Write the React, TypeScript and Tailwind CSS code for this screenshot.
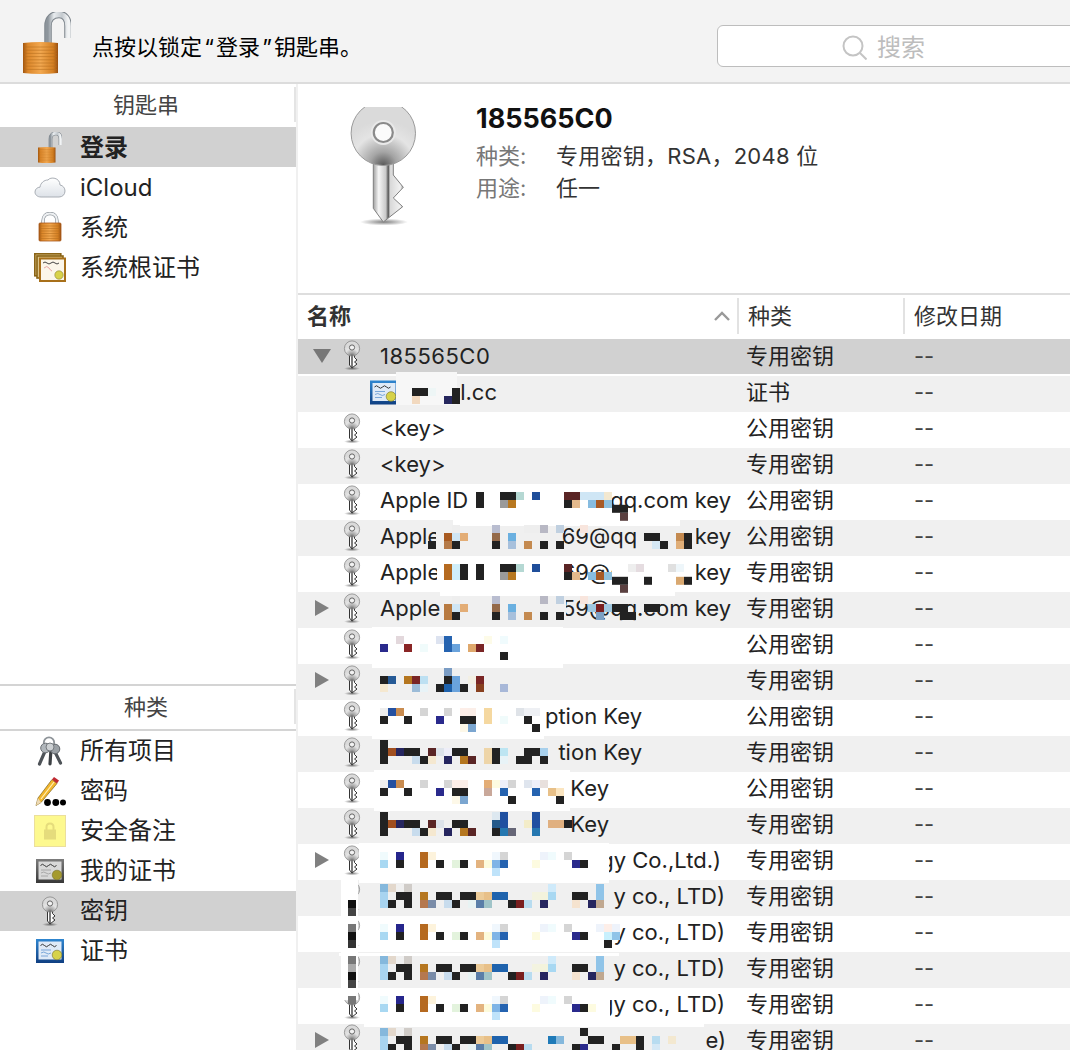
import React from 'react';

type Cell = [number, number, string];
type Block = { y: number; cells: Cell[] };
type Patch = [number, number, number, number, string];

const W = '#ffffff';
const G = '#f0f0f0';
const K = '#222222';

// cover-ups that sit over the row text
const patches: Patch[] = [
  [396, 372, 61, 33, '#f7f7f7'],
  [610, 488, 70, 8, W],
  [453, 520, 227, 6, W],
  [436, 526, 123, 27, G],
  [636, 526, 60, 27, G],
  [437, 556, 128, 34, W],
  [612, 556, 82, 34, W],
  [440, 590, 235, 6, W],
  [440, 596, 126, 27, G],
  [372, 627, 191, 41, W],
  [372, 700, 172, 39, W],
  [374, 770, 196, 41, W],
  [359, 843, 250, 40, W],
  [341, 880, 17, 120, W],
  [339, 953, 280, 3, W],
  [364, 988, 246, 39, W],
  [610, 1018, 94, 9, W],
];

const patA = (y: number, extra: Cell[] = []): Block => ({
  y,
  cells: [
    [0, 0, '#f0fbfd'], [0, 1, '#a8d8f2'], [2, 0, '#26268c'], [2, 1, K], [5, 0, '#b5691f'], [5, 1, '#b5691f'],
    [6, 0, '#fdf3dc'], [7, 1, K], [9, 1, '#e3f3dd'], [10, 1, K], [12, 1, '#e3b37f'], [13, 1, '#fdfbdc'],
    [14, 0, '#f0f7fd'], [14, 1, '#7eb4e6'], [14, 2, '#bfe3fa'], [15, 0, '#d5d5d5'], [15, 1, '#2563b0'],
    [19, 1, '#fdfbe0'], [20, 0, '#eef3fb'], [21, 0, '#f0fbfd'], [23, 0, '#d5d5d5'], [24, 1, '#2a2a8c'], [25, 1, K],
    ...extra,
  ],
});

const patB = (y: number, tail: boolean): Block => ({
  y,
  cells: [
    [0, 0, '#85b8dc'], [0, 1, '#a8d4f0'], [0, 2, '#a8d4f0'], [1, 0, '#e3d8cc'], [1, 2, K], [2, 1, K], [3, 0, '#d0ccc8'], [3, 1, K], [3, 2, K],
    [5, 1, '#b5761f'], [5, 2, '#b5784f'], [6, 2, '#7a8ca8'], [7, 1, K], [8, 1, K], [8, 2, '#c8dced'], [9, 2, K],
    [10, 1, K], [11, 1, K], [11, 2, '#e8f3f3'], [12, 1, '#eccb98'], [12, 2, '#5a7ea8'], [13, 1, '#e8c088'], [13, 2, '#a0c4c8'],
    [14, 1, '#1f63ad'], [15, 1, '#1f63ad'], [16, 2, K], [17, 2, '#7a2020'], [18, 2, '#b8dcf0'],
    ...(tail
      ? ([
          [19, 1, '#f3f3e0'], [20, 1, '#f3f3dc'], [20, 2, '#26265f'], [21, 0, '#cfeafa'], [21, 1, '#a8d8f2'],
          [24, 1, K], [25, 1, K], [24, 2, '#f5e3cf'], [26, 2, '#26265f'], [27, 0, '#90c4e8'], [27, 1, '#90c4e8'], [27, 2, '#c0a890'],
        ] as Cell[])
      : ([
          [21, 1, '#1f7ab8'], [22, 1, '#85b8dc'], [25, 0, K], [26, 1, K], [27, 1, K], [25, 2, '#2a2a8c'], [24, 2, K],
          [30, 1, '#e8c088'], [31, 1, '#e8c088'], [32, 1, K], [29, 2, K], [32, 2, K], [34, 1, '#b8dcf0'], [34, 2, '#d5e8f5'], [36, 1, '#f3e8d0'],
        ] as Cell[])),
  ],
});

const blocks: Block[] = [
  { y: 388, cells: [[4, 0, K], [5, 0, K], [6, 0, '#eef6f6'], [4, 1, '#f2d9bf'], [8, 1, '#26275e'], [9, 0, K], [9, 1, K]] },
  {
    y: 492,
    cells: [
      [12, 0, K], [12, 1, K], [15, 0, K], [16, 0, K], [17, 0, '#b5d8d3'], [15, 1, '#9a9a9a'], [16, 1, '#b87820'], [19, 0, '#1f4e9a'],
      [23, 0, '#5a2525'], [24, 0, '#5a2525'], [23, 1, K], [24, 1, '#e3b98c'], [25, 0, '#cfe6f5'], [26, 0, '#cfe6f5'], [27, 0, '#cfe6f5'],
      [26, 1, '#87bce0'], [27, 1, '#a85a25'], [28, 0, '#f3e8d0'], [28, 1, '#8fc0dd'], [29, 1.6, K], [30, 1.6, K], [30, 2.6, '#5a4040'],
    ],
  },
  {
    y: 525,
    cells: [
      [8, 1, '#a85a20'], [8, 2, '#b57a48'], [9, 0, '#eeeeee'], [9, 1, '#cfe6f5'], [9, 2, K], [10, 1, '#e3ad76'], [6, 2, K], [14, 0, '#b9bdd0'],
      [14, 1, '#94694a'], [14, 2, K], [16, 1, '#6bb0e0'], [16, 2, '#a7c0dc'], [18, 0, '#eeeeee'], [18, 2, '#c48a50'], [19, 0, '#eeeeee'],
      [20, 0, '#b8b8c4'], [20, 2, K], [22, 0, '#c0d0e0'], [22, 2, K], [25, 0, '#f8e5dd'], [33, 1, K], [34, 1, K], [35, 2, K], [34, 2, '#d5e8f5'],
      [37, 1, '#c48a50'], [37, 2, '#e0ae78'], [38, 1, K], [38, 2, K],
    ],
  },
  {
    y: 564,
    cells: [
      [8, 0, '#b56a20'], [8, 1, '#b56a20'], [9, 0, '#cfeefa'], [9, 1, '#cfeefa'], [10, 0, K], [10, 1, K], [12, 0, K], [12, 1, K], [15, 0, K], [16, 0, K],
      [17, 0, '#b5d8d3'], [15, 1, '#9a9a9a'], [16, 1, '#b87820'], [19, 0, '#1f4e9a'], [23, 0, '#5a2525'], [23, 1, K], [24, 1, '#e3b98c'],
      [26, 1, '#87bce0'], [27, 1, '#a85a25'], [28, 1, '#8fc0dd'], [29, 1.6, K], [30, 1.6, K], [30, 2.6, '#5a4040'], [31, 0, '#eeeeee'], [32, 0, '#e5dce0'],
      [33, 1.6, K], [36, 0, '#e0e0e0'], [37, 0, '#eef6fa'], [37, 1.6, '#d9a870'], [38, 1.6, K],
    ],
  },
  {
    y: 596,
    cells: [
      [8, 1, '#b87a40'], [8, 2, '#b87a40'], [9, 0, '#eeeeee'], [9, 1, '#cfe6f5'], [9, 2, K], [10, 1, '#e3ad76'], [14, 0, '#b9bdd0'], [14, 1, '#94694a'],
      [14, 2, K], [16, 1, '#6bb0e0'], [16, 2, '#a7c0dc'], [18, 2, '#c48a50'], [20, 0, '#b8b8c4'], [20, 2, K], [22, 0, '#c0d0e0'], [22, 2, K],
      [25, 0, '#f8e5dd'], [26, 1, '#a0c8e0'], [27, 1, '#7a2020'], [27, 2, '#7ba0c4'], [28, 1, '#a0c8e0'], [29, 1, K], [30, 1, K], [30, 2, K], [31, 2, K],
      [33, 1, K], [34, 1, K],
    ],
  },
  {
    y: 636,
    cells: [
      [0, 1, '#2a2a8c'], [2, 0, '#e3d8dc'], [3, 1, '#8a2525'], [5, 1, '#f0fbfb'], [7, 0, '#dde3f0'], [8, 0, '#2563b0'], [8, 1, '#2563b0'], [9, 1, '#6aa3dc'],
      [11, 1, '#dfa86c'], [12, 1, '#7a2525'], [13, 0, '#fdfbe8'], [15, 0, '#f0fbfd'], [15, 2, K],
    ],
  },
  {
    y: 668,
    cells: [
      [8, 0, '#7a9cc4'], [8, 1, K], [8, 2, '#1f63ad'], [7, 2, K], [9, 1, '#6aa3dc'], [9, 2, '#6aa3dc'], [10, 2, K], [0, 1, K], [0, 2, '#f5e8d0'], [1, 1, '#255a96'],
      [3, 1, '#b5761f'], [4, 1, '#7a2525'], [4, 2, '#9cbcd8'], [5, 1, '#bde0f2'], [5, 2, '#e8f3f7'], [11, 1, '#f3f0e4'], [12, 1, '#7a2525'], [12, 2, '#88401f'], [15, 2, '#a8b8d8'],
    ],
  },
  {
    y: 708,
    cells: [
      [0, 0, '#eeeeee'], [0, 1, K], [1, 0, '#2450a0'], [2, 0, '#c98c50'], [3, 1, K], [5, 0, '#d5d5d5'], [8, 0, '#d5d5d5'], [7, 1, '#2a2a8c'], [10, 1, K], [11, 1, K],
      [10, 0, '#fdeee8'], [11, 0, '#fbeee8'], [10, 2, '#fdf8e8'], [11, 2, '#7ba6d0'], [13, 0, '#f5d8a0'], [13, 1, '#f5d8a0'], [15, 1, '#f0fbfb'], [17, 0, '#dfe3e8'],
      [18, 0, '#eef0f4'], [18, 1, K], [19, 0, '#eef0f4'], [19, 2, K],
    ],
  },
  {
    y: 740,
    cells: [
      [0, 0, K], [0, 1, K], [0, 2, K], [1, 1, '#a04f20'], [2, 1, '#26265f'], [3, 1, K], [4, 1, K], [5, 2, K], [4, 2, '#c8dced'], [6, 1, '#5a2525'], [6, 2, '#f5e8d0'],
      [7, 1, '#dde3ea'], [8, 1, '#eeeef8'], [8, 2, '#26265f'], [9, 1, K], [10, 1, K], [10, 2, '#b5761f'], [11, 2, '#5a2525'], [13, 1, '#eed5a8'], [13, 2, '#eed5a8'],
      [14, 0, '#eeeeee'], [14, 1, K], [14, 2, K], [15, 1, '#bde5f2'], [15, 2, '#e8f3f7'], [17, 2, K], [18, 1, K], [18, 2, K], [19, 1, K], [20, 1, '#a8d0ec'], [20, 2, K],
    ],
  },
  {
    y: 780,
    cells: [
      [0, 0, '#eeeeee'], [0, 1, K], [1, 0, '#2450a0'], [2, 0, '#c98c50'], [3, 1, K], [5, 0, '#d5d5d5'], [7, 1, '#2a2a8c'], [8, 0, '#d5d5d5'], [9, 0, '#fdeee8'], [9, 1, K],
      [10, 0, '#fbeee8'], [10, 1, K], [10, 2, '#7ba6d0'], [9, 2, '#fdf8e8'], [13, 0, '#e3ad76'], [13, 1, '#c9a89a'], [14, 0, '#fdfbe0'], [15, 0, '#eef0fa'], [15, 1, '#2563b0'],
      [16, 0, '#d5d5d5'], [16, 2, K], [18, 0, '#dfe5ee'], [19, 0, '#eef0fa'], [19, 1, '#2563b0'], [20, 0, '#e8e0dd'], [21, 1, '#e8c088'], [22, 1, '#fbe5c0'], [22, 2, K],
    ],
  },
  {
    y: 812,
    cells: [
      [0, 0, K], [0, 1, K], [0, 2, K], [1, 1, '#a04f20'], [2, 1, '#26265f'], [3, 1, K], [4, 1, K], [6, 1, '#5a2525'], [7, 1, '#dde3ea'], [9, 1, K], [10, 1, K],
      [4, 2, '#c8dced'], [5, 2, K], [6, 2, '#f5e8d0'], [8, 2, '#26265f'], [10, 2, '#b5761f'], [11, 2, '#5a2525'], [14, 0, '#dde8f0'], [14, 1, '#255a8a'], [14, 2, K],
      [15, 0, '#2050a0'], [15, 1, '#2050a0'], [15, 2, '#2577b0'], [16, 2, '#666677'], [19, 0, '#2050a0'], [19, 1, '#2050a0'], [19, 2, '#2577b0'], [18, 1, '#f3ecc8'],
      [21, 1, '#e0b080'], [22, 1, '#e0b080'], [23, 1, K],
    ],
  },
  patA(852),
  patB(884, true),
  { y: 900, cells: [[-4, 0, '#111111'], [-4, 1, '#444444'], [-4, 3, '#777777'], [-4, 4, '#111111'], [-4, 5, '#333333'], [-4, 7, '#777777'], [-4, 8, '#aaaaaa'], [-4, 9, '#111111'], [-4, 10, '#444444'], [-4, 12, '#777777']] },
  patA(924, [[27, 0, '#eef3fb'], [28, 0, '#fdeee8'], [28, 1, '#c8f0fd'], [28, 2, K], [29, 0, '#eef3fb'], [29, 1, '#90c4e8']]),
  patB(956, true),
  patA(996, [[26, 1, '#fdfbe0']]),
  patB(1028, false),
];

const types = ['专用密钥', '证书', '公用密钥', '专用密钥', '公用密钥', '公用密钥', '专用密钥', '专用密钥', '公用密钥', '专用密钥', '公用密钥', '专用密钥', '公用密钥', '专用密钥', '专用密钥', '专用密钥', '专用密钥', '专用密钥', '专用密钥', '专用密钥'];

type Row = { left?: string; right?: string; width?: string; arrow?: 'down' | 'right'; cert?: boolean };

const rows: Row[] = [
  { left: '185565C0', arrow: 'down' },
  { right: 'l.cc', width: 'w-[117px]', cert: true },
  { left: '<key>' },
  { left: '<key>' },
  { left: 'Apple ID', right: 'qq.com key', width: 'w-[351px]' },
  { left: 'Apple', right: '69@qq.com key', width: 'w-[351px]' },
  { left: 'Apple', right: '69@qq.com key', width: 'w-[351px]' },
  { left: 'Apple', right: '59@qq.com key', width: 'w-[351px]', arrow: 'right' },
  {},
  { arrow: 'right' },
  { right: 'ption Key', width: 'w-[262px]' },
  { right: 'tion Key', width: 'w-[262px]' },
  { right: 'Key', width: 'w-[229px]' },
  { right: 'Key', width: 'w-[229px]' },
  { right: 'gy Co.,Ltd.)', width: 'w-[341px]', arrow: 'right' },
  { right: 'y co., LTD)', width: 'w-[345px]' },
  { right: 'y co., LTD)', width: 'w-[345px]' },
  { right: 'y co., LTD)', width: 'w-[345px]' },
  { right: 'gy co., LTD)', width: 'w-[345px]' },
  { right: 'e)', width: 'w-[346px]', arrow: 'right' },
];

const Defs = () => (
  <defs>
    <linearGradient id="lockBody" x1="0" x2="1" y1="0" y2="0">
      <stop offset="0" stopColor="#a2560f" />
      <stop offset="0.14" stopColor="#dc872a" />
      <stop offset="0.5" stopColor="#f2a850" />
      <stop offset="0.86" stopColor="#d47f22" />
      <stop offset="1" stopColor="#9a5010" />
    </linearGradient>
    <linearGradient id="shackle" x1="0" x2="1" y1="0" y2="0">
      <stop offset="0" stopColor="#8d959c" />
      <stop offset="0.3" stopColor="#e8ecef" />
      <stop offset="0.7" stopColor="#c3c9ce" />
      <stop offset="1" stopColor="#f2f4f5" />
    </linearGradient>
    <radialGradient id="keyHead" cx="0.5" cy="1" r="0.7">
      <stop offset="0" stopColor="#575757" />
      <stop offset="0.3" stopColor="#a5a5a5" />
      <stop offset="0.7" stopColor="#e4e4e4" />
      <stop offset="1" stopColor="#dadada" />
    </radialGradient>
    <linearGradient id="keyStem" x1="0" x2="1" y1="0" y2="0">
      <stop offset="0" stopColor="#a0a0a0" />
      <stop offset="0.18" stopColor="#f6f6f6" />
      <stop offset="0.42" stopColor="#c8c8c8" />
      <stop offset="0.5" stopColor="#555555" />
      <stop offset="0.56" stopColor="#d8d8d8" />
      <stop offset="0.9" stopColor="#f2f2f2" />
      <stop offset="1" stopColor="#9a9a9a" />
    </linearGradient>
    <radialGradient id="keyShadow">
      <stop offset="0" stopColor="#000" stopOpacity="0.5" />
      <stop offset="1" stopColor="#000" stopOpacity="0" />
    </radialGradient>
    <linearGradient id="cloud" x1="0" x2="0" y1="0" y2="1">
      <stop offset="0" stopColor="#ffffff" />
      <stop offset="1" stopColor="#dde2e8" />
    </linearGradient>
    <linearGradient id="blueFrame" x1="0" x2="0" y1="0" y2="1">
      <stop offset="0" stopColor="#2f86d0" />
      <stop offset="1" stopColor="#0f3f82" />
    </linearGradient>
    <linearGradient id="greyFrame" x1="0" x2="0" y1="0" y2="1">
      <stop offset="0" stopColor="#7c7c7c" />
      <stop offset="1" stopColor="#383838" />
    </linearGradient>
  </defs>
);

const Stripes = ({ x, w, y, n, gap }: { x: number; w: number; y: number; n: number; gap: number }) => (
  <g stroke="#b56d1e" strokeOpacity="0.55" strokeWidth="1">
    {Array.from({ length: n }).map((_, i) => (
      <line key={i} x1={x} x2={x + w} y1={y + i * gap} y2={y + i * gap} />
    ))}
  </g>
);

const OpenLock = ({ className }: { className: string }) => (
  <svg viewBox="0 0 48 62" className={className}>
    <Defs />
    <path d="M25 32V14C25 6 30 2.5 36 2.5S45 7 45 14V26" fill="none" stroke="#7d858c" strokeWidth="7.5" />
    <path d="M25 32V14C25 6 30 2.5 36 2.5S45 7 45 14V26" fill="none" stroke="url(#shackle)" strokeWidth="5.5" />
    <path d="M0 31Q17 29 35 31V61Q17 63 0 61Z" fill="url(#lockBody)" />
    <Stripes x={1} w={33} y={35} n={8} gap={3.2} />
  </svg>
);

const ClosedLock = () => (
  <svg viewBox="0 0 24 30" className="h-[30px] w-[24px]">
    <Defs />
    <path d="M5 13V9C5 4 8 1.5 12 1.5S19 4 19 9V13" fill="none" stroke="#8d959c" strokeWidth="3.4" />
    <path d="M5 13V9C5 4 8 1.5 12 1.5S19 4 19 9V13" fill="none" stroke="#eef0f2" strokeWidth="2" />
    <rect x="1" y="11" width="22" height="18" rx="1" fill="url(#lockBody)" stroke="#a8581c" strokeWidth="0.8" />
    <Stripes x={2} w={20} y={14} n={6} gap={2.5} />
  </svg>
);

const BigKey = () => (
  <svg viewBox="0 0 68 120" className="h-[120px] w-[68px]">
    <Defs />
    <ellipse cx="34" cy="115" rx="24" ry="3.5" fill="url(#keyShadow)" />
    <path d="M23.3 50H43.3V68L53.3 80.3L43.3 91L52.7 99.7L33.3 115L23.3 101.3Z" fill="url(#keyStem)" stroke="#7f7f7f" strokeWidth="1" />
    <circle cx="33.3" cy="26.3" r="32.2" fill="url(#keyHead)" stroke="#9a9a9a" strokeWidth="1" />
    <circle cx="33.3" cy="25.5" r="12.5" fill="#e9e9e9" />
    <circle cx="33.3" cy="25.5" r="9.5" fill="#fbfbfb" stroke="#8a8a8a" strokeWidth="2.2" />
  </svg>
);

const SmallKey = () => (
  <svg viewBox="0 0 18 31" className="h-[31px] w-[18px] shrink-0">
    <Defs />
    <ellipse cx="9" cy="28.5" rx="8" ry="1.8" fill="url(#keyShadow)" />
    <path d="M6.5 13H11.5V17.5L14 20L11.5 22L14 24L9 28L6.5 25Z" fill="#fff" stroke="#333" strokeWidth="1" />
    <path d="M9 14V27" stroke="#222" strokeWidth="1.2" />
    <circle cx="9" cy="8.5" r="7.6" fill="url(#keyHead)" stroke="#888" strokeWidth="0.8" />
    <circle cx="9" cy="7.5" r="2.6" fill="#f2f2f2" stroke="#666" strokeWidth="1" />
  </svg>
);

const Cloud = () => (
  <svg viewBox="0 0 32 24" className="h-[24px] w-[32px]">
    <Defs />
    <path d="M7 22C3 22 1 19.5 1 17C1 14 3.5 12.2 6 12.2C6.5 8 10 5 14 5C16.5 1.5 26 2.5 26 10C29 10.5 31 13 31 16C31 19.5 28.5 22 25 22Z" fill="url(#cloud)" stroke="#a9aeb5" strokeWidth="1" />
  </svg>
);

const Cert = ({ tone, className }: { tone: 'blue' | 'grey'; className: string }) => {
  const blue = tone === 'blue';
  return (
    <svg viewBox="0 0 28 24" className={className}>
      <Defs />
      <rect x="0" y="0" width="28" height="24" fill={blue ? 'url(#blueFrame)' : 'url(#greyFrame)'} />
      <rect x="2.5" y="2.5" width="23" height="18" fill={blue ? '#dfeaf7' : '#d8d8d8'} />
      <path d="M4.5 6.5Q6.5 4 8.5 6.5T12.5 6.5T16.5 6.5T20.5 6.5" fill="none" stroke="#333" strokeWidth="1" />
      <path d="M5 11H15M5 14Q8 12 10 14T15 14M5 17H12" fill="none" stroke={blue ? '#5f95d0' : '#9c9c9c'} strokeWidth="0.8" />
      <circle cx="21" cy="16" r="4.8" fill={blue ? '#d6d24a' : '#a59a2e'} stroke="#77702a" strokeWidth="0.6" />
    </svg>
  );
};

const CertStack = () => (
  <svg viewBox="0 0 32 29" className="h-[29px] w-[32px]">
    <rect x="0.8" y="0.8" width="26" height="22" fill="#dcc489" stroke="#8a6416" strokeWidth="1.6" />
    <rect x="3" y="3" width="26" height="22" fill="#dcc489" stroke="#8a6416" strokeWidth="1.6" />
    <rect x="6" y="5.5" width="25" height="22.5" fill="#fbf6ea" stroke="#a8701a" strokeWidth="2" />
    <path d="M9 10Q11 8 13 10T17 10T21 10T25 10" fill="none" stroke="#444" strokeWidth="1" />
    <path d="M10 15Q13 12 15 15T18 18" fill="none" stroke="#e6a7a7" strokeWidth="1" />
    <circle cx="25" cy="22" r="4.2" fill="#d8d24a" stroke="#8a8430" strokeWidth="0.6" />
  </svg>
);

const KeyRing = () => (
  <svg viewBox="0 0 26 31" className="h-[31px] w-[26px]">
    <circle cx="12" cy="6.5" r="5.2" fill="none" stroke="#8e9499" strokeWidth="1.8" />
    <g stroke="#4e5358" strokeWidth="3.2" strokeLinecap="round">
      <path d="M9 13L2.5 28" />
      <path d="M14 13L13 28" stroke="#3c4044" />
      <path d="M17 14L23.5 27" />
    </g>
    <circle cx="8.5" cy="12" r="4.8" fill="#b0b6bb" stroke="#6c7176" />
    <circle cx="18" cy="13" r="4.8" fill="#9aa0a5" stroke="#62676c" />
    <circle cx="13" cy="11" r="4" fill="#ccd0d3" stroke="#767b80" />
  </svg>
);

const Pencil = () => (
  <svg viewBox="0 0 31 31" className="h-[31px] w-[31px]">
    <path d="M1 29.5L3 22L17 3.5L22 7.5L6 26.5Z" fill="#f2b62c" stroke="#7d6420" strokeWidth="0.7" />
    <path d="M1 29.5L3 22L6 26.5Z" fill="#ecd9b5" />
    <path d="M17 3.5L19 1L24 4.5L22 7.5Z" fill="#c02a32" />
    <path d="M6 23L19 6" stroke="#fff1b8" strokeWidth="1.2" />
    <circle cx="12.5" cy="26.5" r="3.4" fill="#000" />
    <circle cx="20.8" cy="26.5" r="3.4" fill="#000" />
    <circle cx="28" cy="26.5" r="3" fill="#000" />
  </svg>
);

const Note = () => (
  <div className="flex h-[32px] w-[32px] items-center justify-center border border-[#ebdf9c] bg-[#fdf98f]">
    <svg viewBox="0 0 14 18" className="h-[18px] w-[14px]">
      <path d="M3.5 8V5C3.5 2.5 5 1.5 7 1.5S10.5 2.5 10.5 5V8" fill="none" stroke="#e5dc7c" strokeWidth="2" />
      <rect x="1" y="7.5" width="12" height="10" fill="#e5dc7c" />
    </svg>
  </div>
);

const Item = ({ icon, label, active, bold, low }: { icon: React.ReactNode; label: string; active?: boolean; bold?: boolean; low?: boolean }) => (
  <div className={`flex h-[40px] items-center text-[24px] ${active ? 'bg-[#d1d1d1]' : ''}`}>
    <div className="flex w-[80px] shrink-0 items-center justify-center pl-[20px]">{icon}</div>
    <span className={`text-[#222] ${bold ? 'font-bold' : ''} ${low ? 'mt-[2px]' : ''}`}>{label}</span>
  </div>
);

const SideHeader = ({ label, className }: { label: string; className: string }) => (
  <div className={`relative flex items-center justify-center pr-[4px] text-[#444] ${className}`}>
    {label}
    <div className="absolute right-0 top-[3px] h-[35px] w-[2px] bg-[#e4e4e4]" />
  </div>
);

const Arrow = ({ dir }: { dir?: 'down' | 'right' }) => {
  if (dir === 'down') {
    return (
      <svg viewBox="0 0 18 14" className="h-[14px] w-[18px]">
        <path d="M0 0H18L9 14Z" fill="#777" />
      </svg>
    );
  }
  if (dir === 'right') {
    return (
      <svg viewBox="0 0 14 16" className="ml-[2px] h-[16px] w-[14px]">
        <path d="M0 0L14 8L0 16Z" fill="#808080" />
      </svg>
    );
  }
  return null;
};

const lastRow = rows.length - 1;

const TableRow = ({ row, index }: { row: Row; index: number }) => {
  let bg = index % 2 === 1 ? 'bg-[#f0f0f0]' : 'bg-white';
  if (index === 0) bg = 'bg-[#d1d1d1]';
  let pad = 'pb-[4px]';
  if (index === 0) pad = 'pb-[2px]';
  // the last row is cut by the window
  if (index === lastRow) pad = 'pt-[5px]';
  let outer = 'h-[36px] shrink-0';
  if (index === 0) outer = 'h-[37px] shrink-0 pb-[2px]';
  if (index === lastRow) outer = 'h-[26px] shrink-0';
  return (
    <div className={outer}>
      <div className={`flex h-full items-center whitespace-nowrap pl-[15px] ${pad} ${bg}`}>
        <div className="flex w-[30px] shrink-0 items-center">
          <Arrow dir={row.arrow} />
        </div>
        <div className="flex w-[37px] shrink-0 items-center">
          {row.cert ? <Cert tone="blue" className="ml-[27px] h-[25px] w-[28px] shrink-0" /> : <SmallKey />}
        </div>
        <div className={`w-[366px] shrink-0 text-[#222] ${index === 0 ? 'tracking-[0.5px]' : ''}`}>{row.left}</div>
        <div className="w-[168px] shrink-0 text-[#222]">{types[index]}</div>
        <div className="text-[#444]">--</div>
      </div>
    </div>
  );
};

// the end of a name that stays readable after the mosaic, aligned on its right edge
const RightText = ({ row, last }: { row: Row; last: boolean }) => (
  <div className={`flex items-center justify-end whitespace-nowrap text-[#222] ${last ? 'h-[26px] pt-[5px]' : 'h-[36px] pb-[4px]'}`}>
    {row.right}
  </div>
);

export default function App() {
  return (
    <div className="relative h-[1050px] w-[1070px] overflow-hidden bg-white font-['Inter','Noto_Sans_CJK_SC',sans-serif] text-[22px] leading-none">
      {/* Toolbar */}
      <div className="flex h-[84px] items-start border-b-2 border-[#dcdcdc] bg-[#f3f3f3] pl-[23px]">
        <OpenLock className="mt-[12px] h-[62px] w-[48px] shrink-0" />
        <span className="ml-[21px] mt-[36px] text-black">
          点按以锁定<span className="inline-block w-[14px] text-center">“</span>登录<span className="inline-block w-[14px] text-center">”</span>钥匙串。
        </span>
        <div className="ml-auto mr-[-8px] mt-[25px] flex h-[42px] w-[361px] shrink-0 items-center rounded-[6px] border border-[#bdbdbd] bg-white pl-[124px]">
          <svg viewBox="0 0 25 25" className="mt-[2px] h-[25px] w-[25px]" fill="none" stroke="#c4c4c4" strokeWidth="2">
            <circle cx="11" cy="11" r="9.5" />
            <path d="M18 18L24.5 24.5" />
          </svg>
          <span className="ml-[10px] mt-[4px] text-[24px] text-[#bdbdbd]">搜索</span>
        </div>
      </div>

      <div className="flex h-[966px]">
        {/* Sidebar */}
        <div className="flex w-[298px] shrink-0 flex-col border-r-2 border-[#f0f0f0]">
          <div className="h-[600px] shrink-0">
            <SideHeader label="钥匙串" className="h-[43px] pb-[1px]" />
            <Item icon={<OpenLock className="h-[31px] w-[24px]" />} label="登录" active bold low />
            <Item icon={<Cloud />} label="iCloud" low />
            <Item icon={<ClosedLock />} label="系统" low />
            <Item icon={<CertStack />} label="系统根证书" low />
          </div>
          <div className="border-t-2 border-[#d4d4d4]">
            <SideHeader label="种类" className="h-[45px] border-b-2 border-[#d4d4d4] pb-[2px]" />
            <Item icon={<KeyRing />} label="所有项目" />
            <Item icon={<Pencil />} label="密码" />
            <Item icon={<Note />} label="安全备注" />
            <Item icon={<Cert tone="grey" className="h-[24px] w-[28px]" />} label="我的证书" />
            <Item icon={<SmallKey />} label="密钥" active />
            <Item icon={<Cert tone="blue" className="h-[24px] w-[28px]" />} label="证书" />
          </div>
        </div>

        {/* Main */}
        <div className="min-w-0 flex-1">
          <div className="flex h-[211px] border-b-2 border-[#dedede] pl-[52px]">
            <div className="mt-[23px] shrink-0">
              <BigKey />
            </div>
            <div className="ml-[58px] mt-[21px]">
              <div className="text-[27px] font-bold text-[#111]">185565C0</div>
              <div className="mt-[13px] flex text-[#777]">
                <span className="w-[80px]">种类:</span>
                <span className="tracking-[0.25px] text-[#333]">专用密钥，RSA，2048 位</span>
              </div>
              <div className="mt-[10px] flex text-[#777]">
                <span className="w-[80px]">用途:</span>
                <span className="text-[#333]">任一</span>
              </div>
            </div>
          </div>

          <div className="flex h-[44px] items-center pb-[2px] text-[#333]">
            <div className="flex h-[36px] w-[441px] shrink-0 items-center justify-between border-r-2 border-[#e2e2e2] pl-[9px] pr-[7px]">
              <span className="font-bold">名称</span>
              <svg viewBox="0 0 16 10" className="h-[10px] w-[16px]" fill="none" stroke="#999" strokeWidth="2.4">
                <path d="M1 9L8 2L15 9" />
              </svg>
            </div>
            <div className="flex h-[36px] w-[166px] shrink-0 items-center border-r-2 border-[#e2e2e2] pl-[9px]">种类</div>
            <div className="pl-[9px]">修改日期</div>
          </div>

          <div className="relative flex flex-col">
            {rows.map((row, i) => (
              <TableRow key={i} row={row} index={i} />
            ))}
            <div className="absolute left-[82px] top-0 flex flex-col">
              {rows.map((row, i) => {
                let h = 'h-[36px]';
                if (i === 0) h = 'h-[37px]';
                if (i === lastRow) h = 'h-[26px]';
                return (
                  <div key={i} className={`${h} ${row.width ?? 'w-0'}`}>
                    {row.right && <RightText row={row} last={i === lastRow} />}
                  </div>
                );
              })}
            </div>
          </div>
        </div>
      </div>

      {/* Pixelated cover-ups over the list */}
      <svg viewBox="0 0 1070 1050" className="pointer-events-none absolute left-0 top-0 h-[1050px] w-[1070px]">
        {patches.map(([x, y, w, h, c], i) => (
          <rect key={i} x={x} y={y} width={w} height={h} fill={c} />
        ))}
        {blocks.map((b, i) =>
          b.cells.map(([k, l, c], j) => <rect key={`${i}-${j}`} x={380 + 8 * k} y={b.y + 8 * l} width="8" height="8" fill={c} />),
        )}
      </svg>
    </div>
  );
}
